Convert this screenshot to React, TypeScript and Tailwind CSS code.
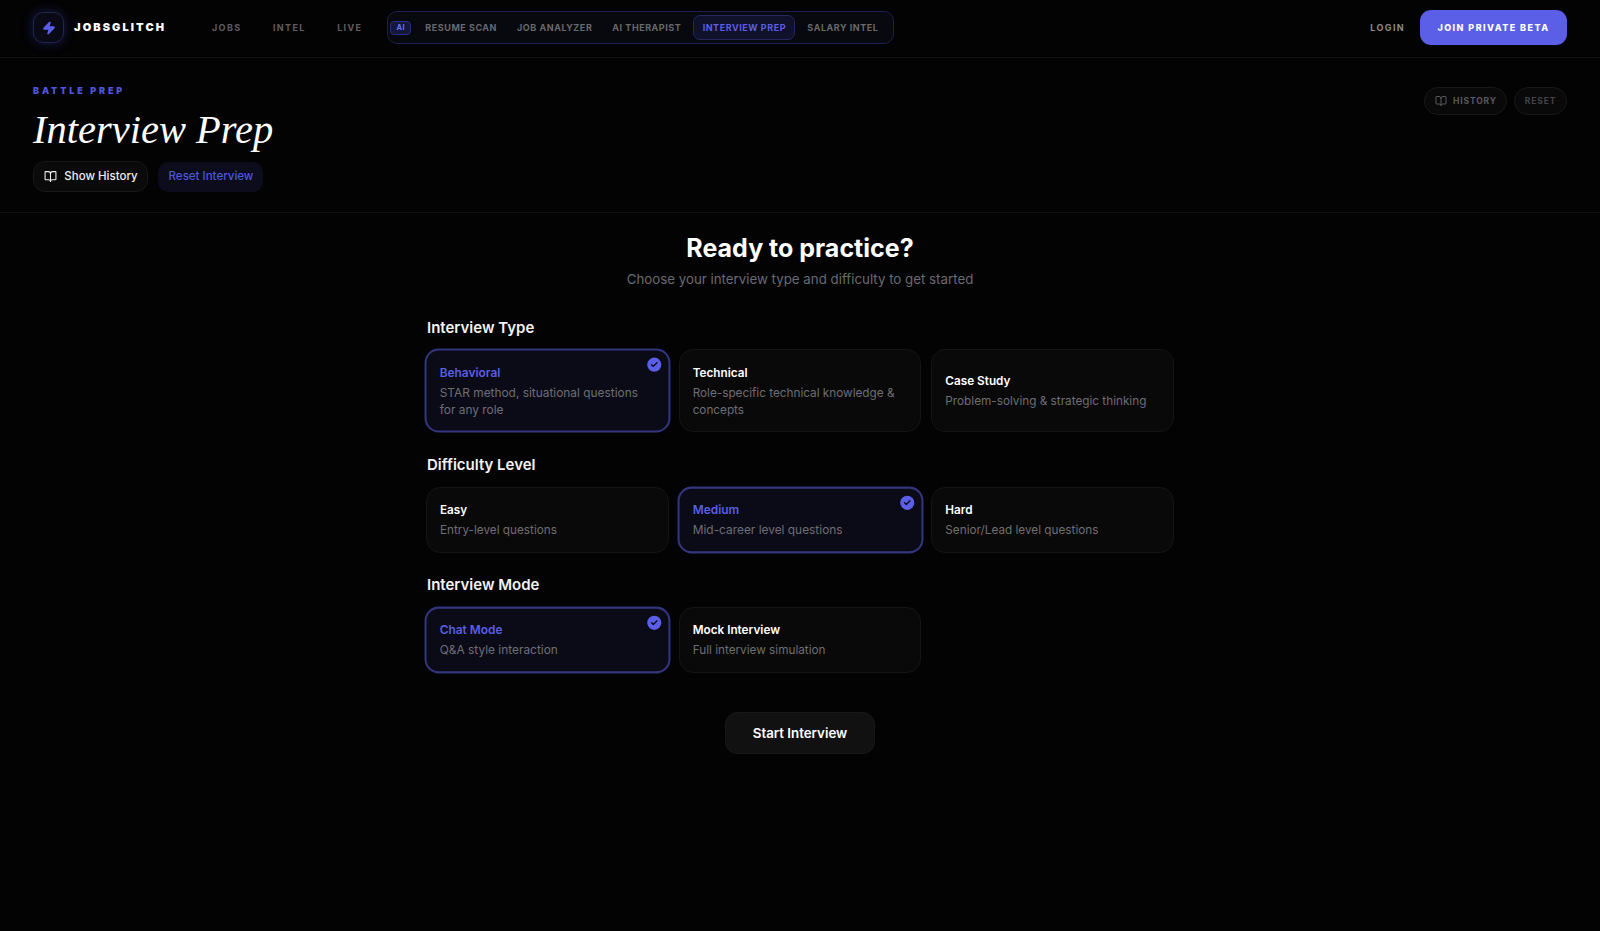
import { BookOpen, Check, Zap } from "lucide-react";

const inter = "font-['Inter',sans-serif]";

const Option = ({ title, desc, selected = false, className = "" }: { title: string; desc: string; selected?: boolean; className?: string }) => (
  <div
    className={`relative flex flex-col justify-center rounded-[14px] px-[13px] ${className} ${
      selected
        ? "scale-[1.012] border-2 border-[#33357f] bg-[#0b0b18]"
        : "border border-[#141416] bg-[#09090a]"
    }`}
  >
    <div className={`text-[11.75px] leading-[18px] font-semibold ${selected ? "text-[#5b5ee6]" : "text-white"}`}>{title}</div>
    <div className="mt-[3px] text-[11.75px] leading-[17px] text-[#6e6e73]">{desc}</div>
    {selected ? (
      <div className="absolute top-[7px] right-[7px] flex h-[14px] w-[14px] items-center justify-center rounded-full bg-[#5b5ee6]">
        <Check size={8} strokeWidth={4} className="text-[#0b0b18]" />
      </div>
    ) : null}
  </div>
);

const Heading = ({ children, className = "" }: { children: string; className?: string }) => (
  <h2 className={`pl-[1px] text-[15px] leading-[22px] font-semibold text-[#f2f2f2] ${className}`}>{children}</h2>
);

export default function App() {
  const aiLinks = ["RESUME SCAN", "JOB ANALYZER", "AI THERAPIST"];

  return (
    <div className={`h-[931px] overflow-hidden bg-[#030304] ${inter}`}>
      <header className="flex h-[58px] items-center border-b border-[#101012] px-[33px] pb-[2px]">
        <div className="flex h-[31px] w-[31px] items-center justify-center rounded-[10px] border border-[#23244f] bg-[#0a0a16] shadow-[0_0_12px_rgba(70,72,210,0.35)]">
          <Zap size={14} className="fill-[#5b5ee6] text-[#5b5ee6]" />
        </div>
        <span className="ml-[10px] w-[92px] text-[11px] font-black tracking-[0.19em] whitespace-nowrap text-white">JOBSGLITCH</span>
        <nav className="ml-[46px] flex items-center gap-[31.5px] text-[9px] font-bold tracking-[0.15em] text-[#5e5e62]">
          <span>JOBS</span>
          <span>INTEL</span>
          <span>LIVE</span>
        </nav>
        <div className="ml-[25px] flex h-[33px] w-[507px] shrink-0 items-center rounded-[10px] border border-[#1e1f4d] bg-[#08080f] pl-[2px] text-[9px] font-bold tracking-[0.06em] whitespace-nowrap text-[#68686d]">
          <span className="flex h-[14px] w-[21px] items-center justify-center rounded-[4px] border border-[#2c2e78] bg-[#16173c] text-[7.5px] text-[#6b6ef0]">AI</span>
          <div className="ml-[14px] flex w-[268px] items-center gap-[20px]">
            {aiLinks.map((link) => (
              <span key={link}>{link}</span>
            ))}
          </div>
          <span className="flex h-[25px] w-[102px] items-center justify-center rounded-[7px] border border-[#26275f] bg-[#10112a] text-[#5b5ee6]">INTERVIEW PREP</span>
          <span className="ml-[12px]">SALARY INTEL</span>
        </div>
        <span className="ml-auto text-[9px] font-bold tracking-[0.15em] text-[#8a8a8e]">LOGIN</span>
        <button className="ml-[15px] h-[35px] w-[147px] rounded-[11px] bg-[#5b5ee6] text-[9px] font-extrabold tracking-[0.16em] text-white">JOIN PRIVATE BETA</button>
      </header>

      <section className="flex h-[155px] justify-between border-b border-[#101012] px-[33px]">
        <div>
          <div className="mt-[27px] text-[9px] leading-[12px] font-black tracking-[0.32em] text-[#5055dd]">BATTLE PREP</div>
          <h1 className="mt-[7px] font-['Liberation_Serif',serif] text-[40.5px] leading-[52px] text-white italic">Interview Prep</h1>
          <div className="mt-[5px] flex items-center gap-[10px]">
            <button className="flex h-[31px] w-[115px] items-center justify-center gap-[7px] rounded-[12px] border border-[#18181a] bg-[#0a0a0b] pl-[1px] text-[11.5px] font-medium text-[#eeeeee]">
              <BookOpen size={13} />
              Show History
            </button>
            <button className="h-[30px] w-[105px] rounded-[10px] bg-[#0c0c1c] pl-[1px] text-[11.5px] font-medium text-[#5055dd]">Reset Interview</button>
          </div>
        </div>
        <div className="mt-[29px] flex items-start gap-[7px] text-[8.5px] font-bold tracking-[0.1em] text-[#5a5a5e]">
          <button className="flex h-[28px] w-[83px] items-center justify-center gap-[6px] rounded-full border border-[#18181a] bg-[#09090a] pl-[1px]">
            <BookOpen size={12} />
            HISTORY
          </button>
          <button className="h-[28px] w-[53px] rounded-full border border-[#18181a] bg-[#09090a] text-[#444448]">RESET</button>
        </div>
      </section>

      <main className="mx-auto w-[748px]">
        <div className="pt-[20px] text-center">
          <h1 className="text-[25px] leading-[30px] font-bold text-white">Ready to practice?</h1>
          <p className="mt-[6px] text-[13.3px] leading-[20px] text-[#6a6a6f]">Choose your interview type and difficulty to get started</p>
        </div>

        <Heading className="mt-[28px]">Interview Type</Heading>
        <div className="mt-[10px] grid h-[83px] grid-cols-3 gap-[10px]">
          <Option selected title="Behavioral" desc="STAR method, situational questions for any role" className="pt-[1px]" />
          <Option title="Technical" desc="Role-specific technical knowledge & concepts" className="pt-[1px]" />
          <Option title="Case Study" desc="Problem-solving & strategic thinking" />
        </div>

        <Heading className="mt-[22px]">Difficulty Level</Heading>
        <div className="mt-[11px] grid h-[66px] grid-cols-3 gap-[10px]">
          <Option title="Easy" desc="Entry-level questions" />
          <Option selected title="Medium" desc="Mid-career level questions" />
          <Option title="Hard" desc="Senior/Lead level questions" />
        </div>

        <Heading className="mt-[21px]">Interview Mode</Heading>
        <div className="mt-[11px] grid h-[66px] grid-cols-3 gap-[10px]">
          <Option selected title="Chat Mode" desc="Q&A style interaction" />
          <Option title="Mock Interview" desc="Full interview simulation" />
        </div>

        <div className="mt-[39px] flex justify-center">
          <button className="h-[42px] w-[150px] rounded-[12px] border border-[#18181a] bg-[#111112] pt-[1px] text-[13.3px] font-semibold text-white">Start Interview</button>
        </div>
      </main>
    </div>
  );
}
